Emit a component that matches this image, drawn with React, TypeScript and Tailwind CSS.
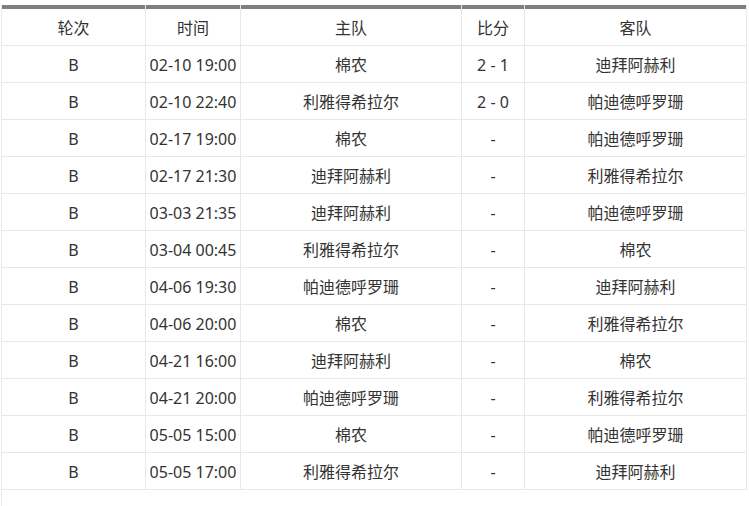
const rows: [string, string, string, string, string][] = [
  ['B', '02-10 19:00', '棉农', '2 - 1', '迪拜阿赫利'],
  ['B', '02-10 22:40', '利雅得希拉尔', '2 - 0', '帕迪德呼罗珊'],
  ['B', '02-17 19:00', '棉农', '-', '帕迪德呼罗珊'],
  ['B', '02-17 21:30', '迪拜阿赫利', '-', '利雅得希拉尔'],
  ['B', '03-03 21:35', '迪拜阿赫利', '-', '帕迪德呼罗珊'],
  ['B', '03-04 00:45', '利雅得希拉尔', '-', '棉农'],
  ['B', '04-06 19:30', '帕迪德呼罗珊', '-', '迪拜阿赫利'],
  ['B', '04-06 20:00', '棉农', '-', '利雅得希拉尔'],
  ['B', '04-21 16:00', '迪拜阿赫利', '-', '棉农'],
  ['B', '04-21 20:00', '帕迪德呼罗珊', '-', '利雅得希拉尔'],
  ['B', '05-05 15:00', '棉农', '-', '帕迪德呼罗珊'],
  ['B', '05-05 17:00', '利雅得希拉尔', '-', '迪拜阿赫利'],
]

const widths = ['w-[144px]', 'w-[95px]', 'w-[221px]', 'w-[63px]', 'w-[222px]']
const headers = ['轮次', '时间', '主队', '比分', '客队']

export default function App() {
  return (
    <div
      className="h-[506px] w-[749px] bg-white text-[16px] text-[#333] overflow-hidden pt-[5px] pl-[1px]"
      style={{ fontFamily: '"Noto Sans", "Noto Sans CJK SC", sans-serif' }}
    >
      <div className="border-l border-[#e8e8e8] h-full">
        <div className="flex">
          {headers.map((h, i) => (
            <div key={h} className={`${widths[i]} border-r border-b border-[#e8e8e8] flex flex-col`}>
              <div className="h-[4px] bg-[#7f7f7f]" />
              <div className="h-[36px] flex items-center justify-center pt-[1px]">{h}</div>
            </div>
          ))}
        </div>
        {rows.map((r, ri) => (
          <div key={ri} className="flex">
            {r.map((c, i) => (
              <div
                key={i}
                className={`${widths[i]} h-[37px] border-r border-b border-[#e8e8e8] flex items-center justify-center leading-none pt-[2px]`}
              >
                {c}
              </div>
            ))}
          </div>
        ))}
      </div>
    </div>
  )
}
